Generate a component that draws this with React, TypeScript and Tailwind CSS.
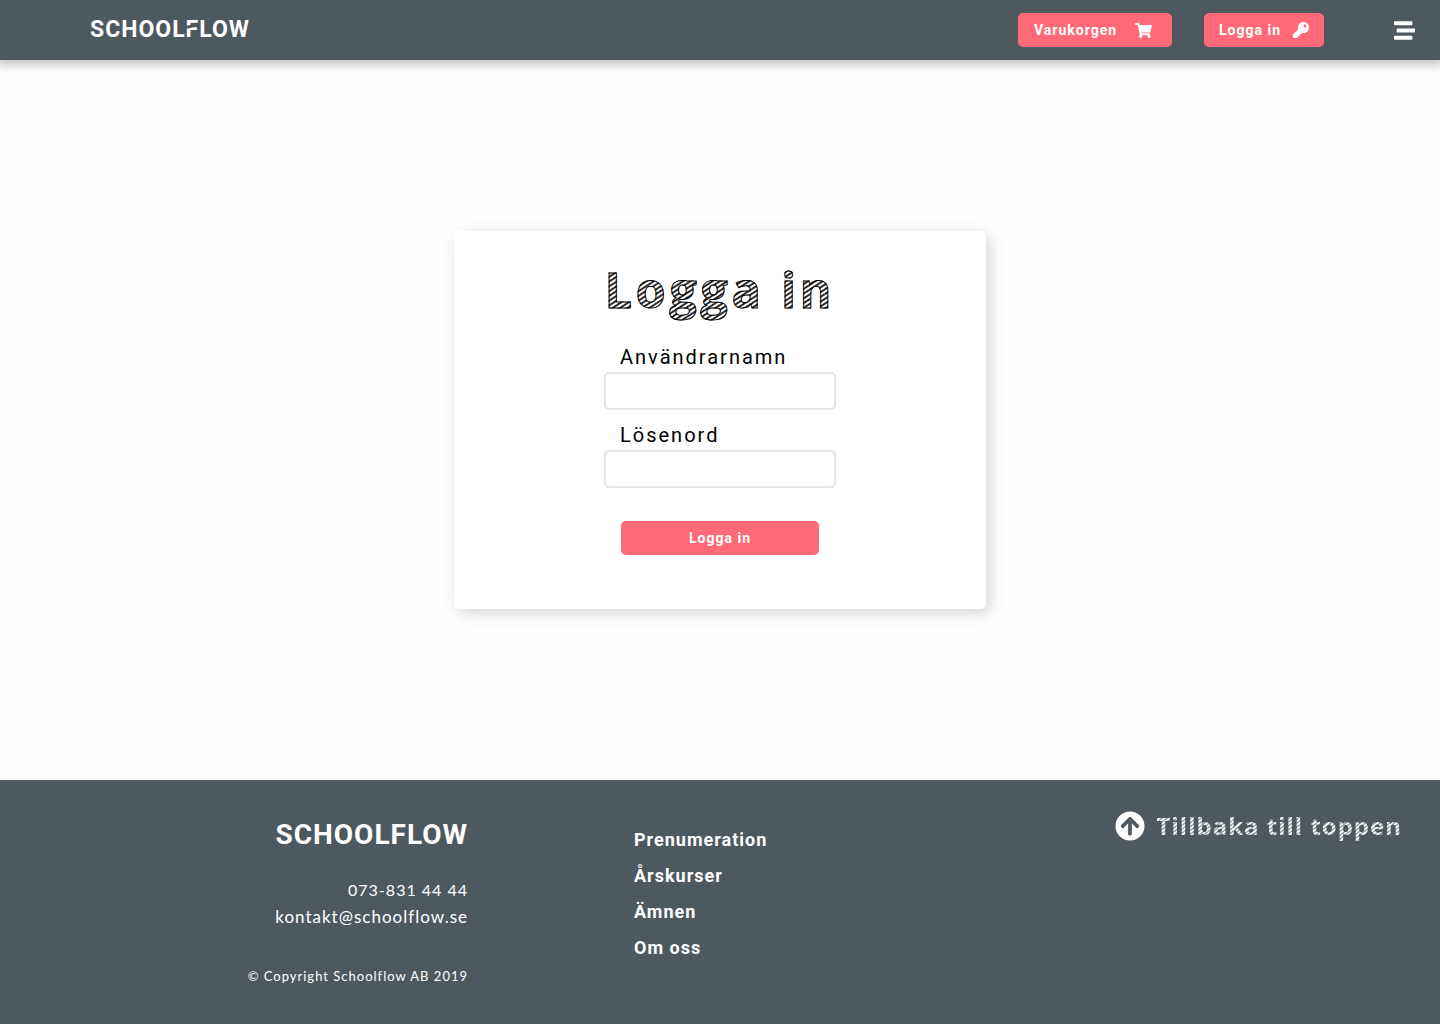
import { FaArrowCircleUp, FaKey, FaShoppingCart, FaStream } from "react-icons/fa";

const navLinks = ["Prenumeration", "Årskurser", "Ämnen", "Om oss"];

function Header() {
  return (
    <header className="flex h-15 items-center justify-between bg-[#4e595f] pr-[25px] pl-[90px] text-white shadow-[0_3px_8px_3px_rgba(0,0,0,0.2)]">
      <a href="#" className="text-[23px] leading-8 font-bold tracking-[1px]">
        SCHOOL
        <span className="relative">
          F
          <span className="absolute top-[9px] left-0 h-[3px] w-2 -skew-y-12 bg-[#4e595f]" />
        </span>
        LOW
      </a>
      <div className="flex items-center">
        <button className="flex h-[34px] w-[154px] items-center justify-between rounded-[5px] bg-[#ff6978] pr-5 pl-4 text-sm font-bold tracking-[1px]">
          Varukorgen
          <FaShoppingCart className="h-[15px] w-[17px]" />
        </button>
        <button className="ml-8 flex h-[34px] w-[120px] items-center justify-between rounded-[5px] bg-[#ff6978] px-[15px] text-sm font-bold tracking-[1px]">
          Logga in
          <FaKey className="size-4" />
        </button>
        <button aria-label="Meny" className="ml-[70px]">
          <FaStream className="size-[21px]" />
        </button>
      </div>
    </header>
  );
}

function Field({ id, label, type }: { id: string; label: string; type: string }) {
  return (
    <div className="flex h-[78px] w-[232px] flex-col">
      <label htmlFor={id} className="pl-4 text-xl leading-[30px] tracking-[2px]">
        {label}
      </label>
      <input id={id} type={type} className="h-[38px] rounded-[5px] border-2 border-[#e4e4e4] bg-white px-3" />
    </div>
  );
}

function LoginCard() {
  return (
    <form className="flex w-full max-w-[532px] flex-col items-center rounded-[5px] bg-white pt-6 pb-[54px] shadow-[4px_4px_16px_rgba(0,0,0,0.17)]">
      <h1 className="bg-[repeating-linear-gradient(147deg,#222_0_1px,#fff_2px_3px,#555_4px)] bg-clip-text font-['Open_Sans'] text-5xl leading-[70px] font-bold tracking-[4px] text-transparent [-webkit-text-stroke:1px_#000]">
        Logga in
      </h1>
      <div className="mt-[17px] flex flex-col">
        <Field id="username" label="Användrarnamn" type="text" />
        <Field id="password" label="Lösenord" type="password" />
      </div>
      <button type="button" className="mt-[23px] h-[34px] w-[198px] rounded-[5px] bg-[#ff6978] text-sm font-bold tracking-[1px] text-white">
        Logga in
      </button>
    </form>
  );
}

function Footer() {
  return (
    <footer className="grid min-h-[244px] grid-cols-3 bg-[#4e595f] text-white">
      <div className="flex flex-col items-end pt-9 pr-3 font-['Lato'] tracking-[1px]">
        <p className="font-['Roboto'] text-[28px] leading-[38px] font-bold">SCHOOLFLOW</p>
        <p className="mt-[22px] text-base leading-[27px]">073-831 44 44</p>
        <a href="mailto:kontakt@schoolflow.se" className="text-[17px] leading-[27px]">
          kontakt@schoolflow.se
        </a>
        <p className="mt-9 text-[13px] leading-5">© Copyright Schoolflow AB 2019</p>
      </div>
      <nav className="flex flex-col items-start pt-[42px] pl-[154px] text-lg leading-9 font-bold tracking-[1px]">
        {navLinks.map((label) => (
          <a key={label} href="#">
            {label}
          </a>
        ))}
      </nav>
      <div className="flex items-start justify-end pt-7 pr-[38px]">
        <a href="#" className="flex items-center gap-3">
          <FaArrowCircleUp className="size-[30px]" />
          <span className="bg-[repeating-linear-gradient(142deg,#fff_0_1px,#8b9397_2px,#d5d9db_3px)] bg-clip-text font-['Open_Sans'] text-2xl leading-9 font-bold tracking-[1px] text-transparent">
            Tillbaka till toppen
          </span>
        </a>
      </div>
    </footer>
  );
}

export default function App() {
  return (
    <div className="flex min-h-screen flex-col bg-[#fefefe] font-['Roboto'] text-black">
      <Header />
      <main className="flex flex-1 items-center justify-center">
        <LoginCard />
      </main>
      <Footer />
    </div>
  );
}
